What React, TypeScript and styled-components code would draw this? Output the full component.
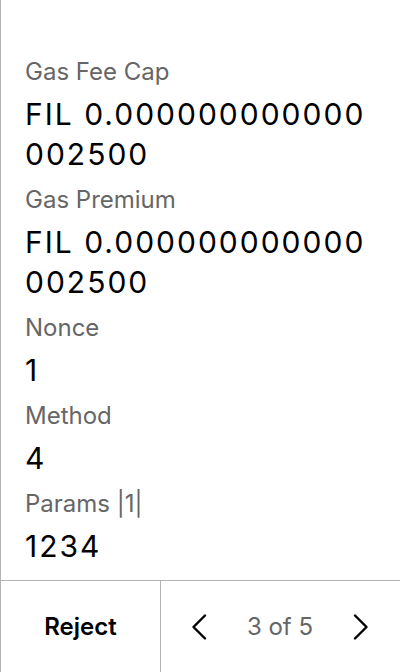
import React from "react";
import styled, { createGlobalStyle } from "styled-components";

const Global = createGlobalStyle`
  html, body { margin: 0; padding: 0; background: #fff; }
  body { font-family: Inter, "Noto Sans", sans-serif; -webkit-font-smoothing: antialiased; }
  * { box-sizing: border-box; }
`;

const Screen = styled.div`
  height: 672px;
  display: flex;
  flex-direction: column;
  border-left: 1px solid #b3b3b3;
  background: #fff;
`;

const Content = styled.div`
  flex: 1;
  padding: 58px 24px 14px 24px;
  display: flex;
  flex-direction: column;
  gap: 12px;
  overflow: hidden;
`;

const Field = styled.div`
  display: flex;
  flex-direction: column;
  gap: 8px;
`;

const Label = styled.div`
  font-size: 24px;
  line-height: 28px;
  color: #666;
`;

const Value = styled.div`
  font-size: 30px;
  line-height: 40px;
  letter-spacing: 2px;
  color: #000;
  word-break: break-all;
`;

const Footer = styled.div`
  height: 92px;
  border-top: 1px solid #b3b3b3;
  display: grid;
  grid-template-columns: 160px 1fr;
`;

const RejectButton = styled.button`
  border: none;
  border-right: 1px solid #b3b3b3;
  background: transparent;
  font-family: inherit;
  font-size: 24px;
  font-weight: 600;
  color: #000;
  padding: 0;
  cursor: pointer;
`;

const Pager = styled.div`
  display: flex;
  align-items: center;
  justify-content: space-between;
  padding: 0 29px 0 28px;
`;

const ArrowButton = styled.button`
  border: none;
  background: transparent;
  padding: 0;
  width: 20px;
  height: 28px;
  display: flex;
  align-items: center;
  justify-content: center;
  cursor: pointer;
`;

const PageText = styled.span`
  font-size: 24px;
  color: #666;
`;

const Chevron = ({ dir }: { dir: "left" | "right" }) => (
  <svg width="16" height="26" viewBox="0 0 16 26" fill="none">
    <path
      d={dir === "left" ? "M14 1.5 L2.5 13 L14 24.5" : "M2 1.5 L13.5 13 L2 24.5"}
      stroke="#000"
      strokeWidth="2.4"
      strokeLinecap="round"
      strokeLinejoin="round"
    />
  </svg>
);

const fields = [
  { label: "Gas Fee Cap", value: "FIL 0.000000000000002500" },
  { label: "Gas Premium", value: "FIL 0.000000000000002500" },
  { label: "Nonce", value: "1" },
  { label: "Method", value: "4" },
  { label: "Params |1|", value: "1234" },
];

export default function App() {
  return (
    <>
      <Global />
      <Screen>
        <Content>
          {fields.map((f) => (
            <Field key={f.label}>
              <Label>{f.label}</Label>
              <Value>{f.value}</Value>
            </Field>
          ))}
        </Content>
        <Footer>
          <RejectButton>Reject</RejectButton>
          <Pager>
            <ArrowButton aria-label="previous">
              <Chevron dir="left" />
            </ArrowButton>
            <PageText>3 of 5</PageText>
            <ArrowButton aria-label="next">
              <Chevron dir="right" />
            </ArrowButton>
          </Pager>
        </Footer>
      </Screen>
    </>
  );
}
